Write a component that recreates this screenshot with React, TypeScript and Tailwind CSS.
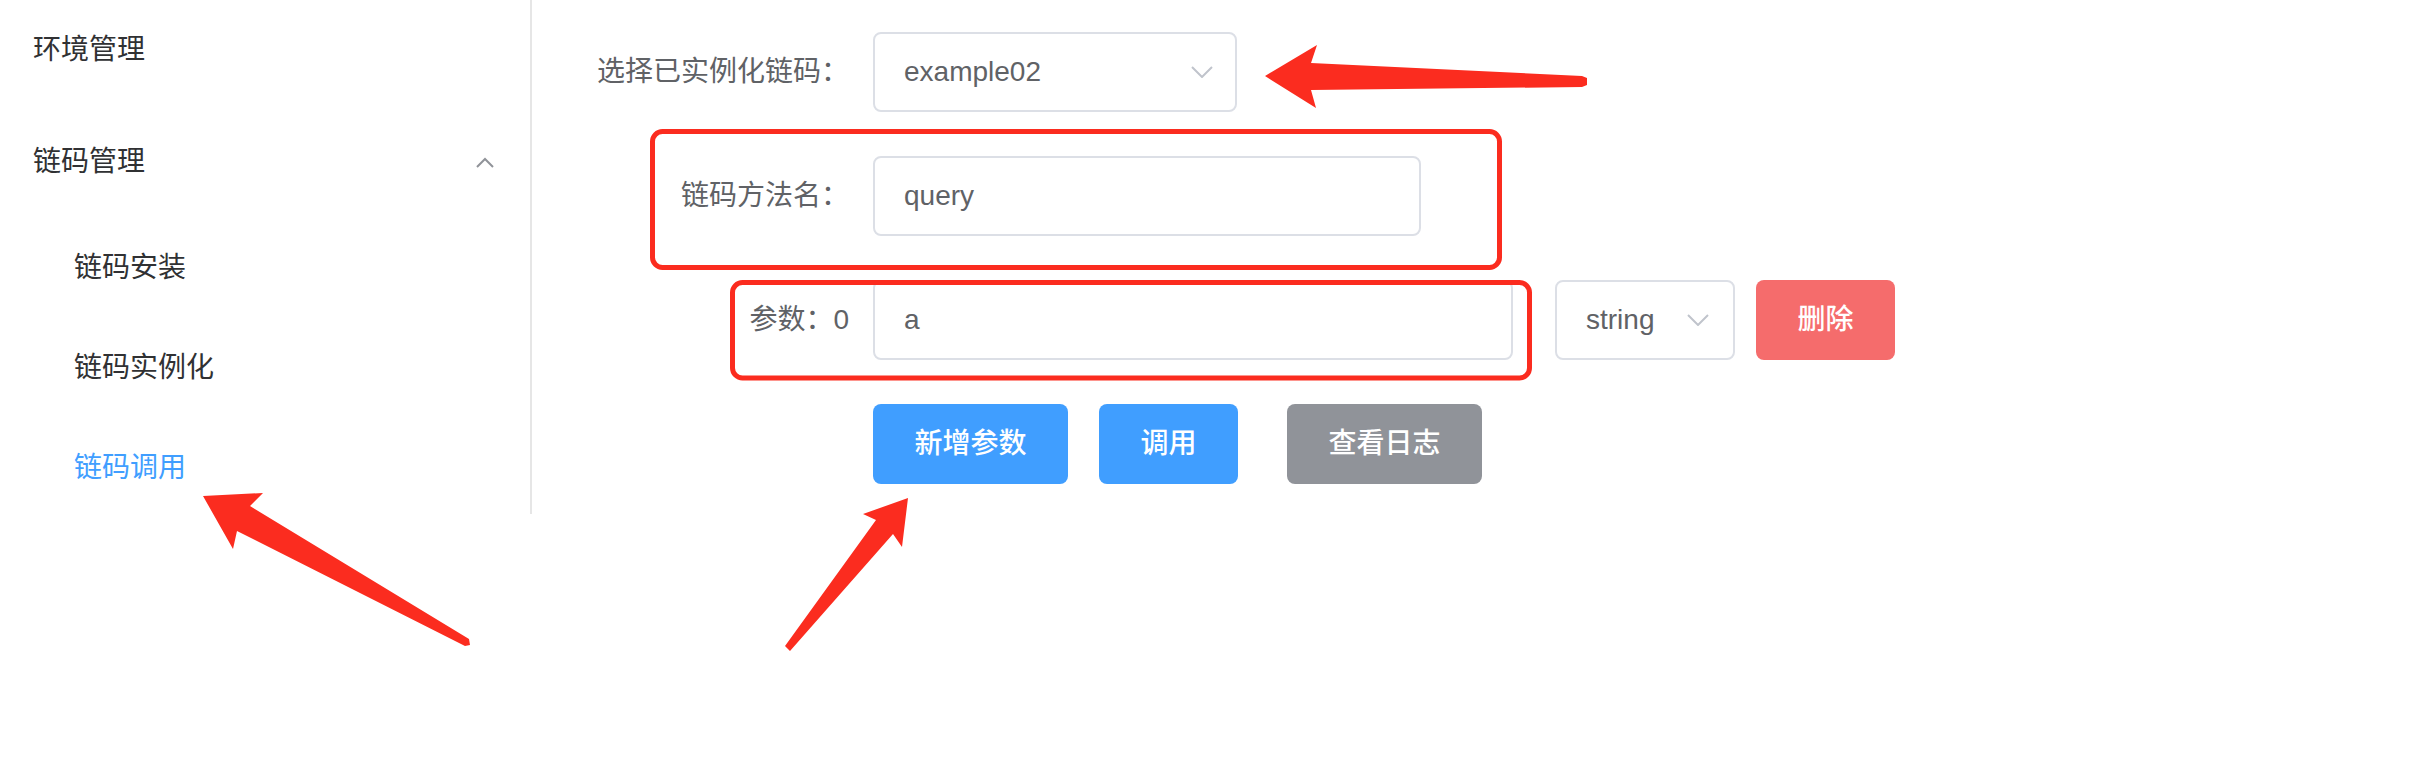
const ChevronUp = () => (
  <svg width="18" height="11" viewBox="0 0 18 11" fill="none">
    <path d="M1 10 L9 2 L17 10" stroke="#909399" strokeWidth="2" />
  </svg>
);

const ChevronDown = () => (
  <svg width="22" height="12" viewBox="0 0 22 12" fill="none">
    <path d="M1 1 L11 11 L21 1" stroke="#c0c4cc" strokeWidth="2" />
  </svg>
);

const subItems = ["链码安装", "链码实例化", "链码调用"];

const Sidebar = () => (
  <aside className="w-[532px] h-[514px] shrink-0 self-start overflow-hidden border-r-2 border-[#e6e6e6]">
    <ul className="-mt-[6px] text-[28px] text-[#303133]">
      <li className="h-[112px] pl-[33px] flex items-center">环境管理</li>
      <li>
        <div className="h-[112px] pl-[33px] pr-[36px] flex items-center justify-between">
          <span>链码管理</span>
          <ChevronUp />
        </div>
        <ul>
          {subItems.map((item) => (
            <li
              key={item}
              className={`h-[100px] pl-[74px] flex items-center ${
                item === "链码调用" ? "text-[#409eff]" : ""
              }`}
            >
              {item}
            </li>
          ))}
        </ul>
      </li>
    </ul>
  </aside>
);

const Label = ({ children }: { children: React.ReactNode }) => (
  <label className="w-[313px] shrink-0 pr-[24px] text-right text-[28px] text-[#606266]">
    {children}
  </label>
);

const Annotations = () => (
  <svg
    className="absolute inset-0 pointer-events-none"
    width="2422"
    height="766"
    viewBox="0 0 2422 766"
  >
    <rect x="652.5" y="131.5" width="847" height="136" rx="10" fill="none" stroke="#fb2c1f" strokeWidth="5" />
    <rect x="732.5" y="282.5" width="797" height="95.5" rx="10" fill="none" stroke="#fb2c1f" strokeWidth="5" />
    <polygon
      fill="#fb2c1f"
      points="1265,76 1317,45 1311,63 1582,76 1587,78 1587,85 1582,87 1311,90 1316,108"
    />
    <polygon
      fill="#fb2c1f"
      points="203,496 263,493 250,506 469,639 470,645 465,646 237,531 233,549"
    />
    <polygon
      fill="#fb2c1f"
      points="908,498 902,547 893,534 790,651 785,646 876,520 863,514"
    />
  </svg>
);

export default function App() {
  return (
    <div className="relative w-[2422px] h-[766px] overflow-hidden bg-white font-['Liberation_Sans','Noto_Sans_CJK_SC',sans-serif]">
      <div className="flex">
        <Sidebar />
        <main className="flex-1 pl-[28px] pt-[32px] flex flex-col gap-[44px]">
          <div className="flex items-center">
            <Label>选择已实例化链码：</Label>
            <div className="w-[364px] h-[80px] border-2 border-[#dcdfe6] rounded-[8px] pl-[29px] pr-[22px] flex items-center justify-between text-[28px] text-[#606266]">
              <span>example02</span>
              <ChevronDown />
            </div>
          </div>
          <div className="flex items-center">
            <Label>链码方法名：</Label>
            <div className="w-[548px] h-[80px] border-2 border-[#dcdfe6] rounded-[8px] pl-[29px] flex items-center text-[28px] text-[#606266]">
              query
            </div>
          </div>
          <div className="flex items-center">
            <Label>参数：0</Label>
            <div className="w-[640px] h-[80px] border-2 border-[#dcdfe6] rounded-[8px] pl-[29px] flex items-center text-[28px] text-[#606266]">
              a
            </div>
            <div className="ml-[42px] w-[180px] h-[80px] border-2 border-[#dcdfe6] rounded-[8px] pl-[29px] pr-[24px] flex items-center justify-between text-[28px] text-[#606266]">
              <span>string</span>
              <ChevronDown />
            </div>
            <button className="ml-[21px] w-[139px] h-[80px] rounded-[8px] bg-[#f56c6c] text-white text-[28px] font-medium">
              删除
            </button>
          </div>
          <div className="flex items-center pl-[313px]">
            <button className="w-[195px] h-[80px] rounded-[8px] bg-[#409eff] text-white text-[28px] font-medium">
              新增参数
            </button>
            <button className="ml-[31px] w-[139px] h-[80px] rounded-[8px] bg-[#409eff] text-white text-[28px] font-medium">
              调用
            </button>
            <button className="ml-[49px] w-[195px] h-[80px] rounded-[8px] bg-[#909399] text-white text-[28px] font-medium">
              查看日志
            </button>
          </div>
        </main>
      </div>
      <Annotations />
    </div>
  );
}
